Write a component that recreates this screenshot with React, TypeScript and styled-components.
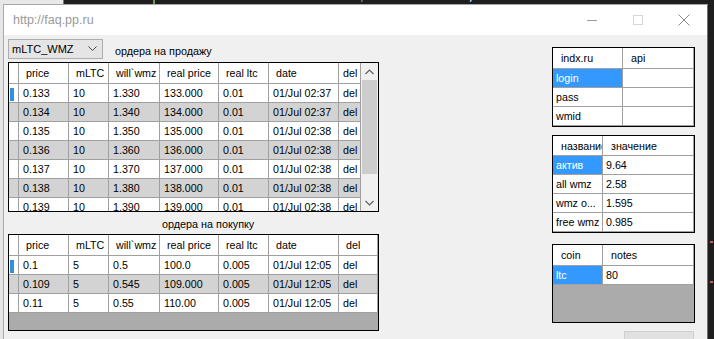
import React from 'react';
import styled, { createGlobalStyle } from 'styled-components';

const GlobalStyle = createGlobalStyle`
  html, body { margin: 0; padding: 0; background: #1e1e1e; }
  body { font-family: "Liberation Sans", Arial, sans-serif; }
`;

type Col = { title: string; width: number; pad?: number };

const sellCols: Col[] = [
  { title: 'price', width: 50 },
  { title: 'mLTC', width: 40 },
  { title: 'will`wmz', width: 51 },
  { title: 'real price', width: 59 },
  { title: 'real ltc', width: 50 },
  { title: 'date', width: 70 },
  { title: 'del', width: 22, pad: 4 },
];

const buyCols: Col[] = [...sellCols.slice(0, 6), { title: 'del', width: 39 }];

const sellRows = [133, 134, 135, 136, 137, 138, 139].map((n, i) => [
  (n / 1000).toFixed(3),
  '10',
  (n / 100).toFixed(3),
  n.toFixed(3),
  '0.01',
  i < 2 ? '01/Jul 02:37' : '01/Jul 02:38',
  'del',
]);

const buyRows = [
  ['0.1', '5', '0.5', '100.0', '0.005', '01/Jul 12:05', 'del'],
  ['0.109', '5', '0.545', '109.000', '0.005', '01/Jul 12:05', 'del'],
  ['0.11', '5', '0.55', '110.00', '0.005', '01/Jul 12:05', 'del'],
];

const App = () => {
  return (
    <>
      <GlobalStyle />
      <Screen>
        <EditorStrip>
          <LightCorner />
          <CodeBit $color="#569cd6" $left={42}>398</CodeBit>
          <CodeMark />
          <CodeBit $color="#9cdcfe" $left={160}>date $tave = 'xfd';</CodeBit>
        </EditorStrip>
        <Middle>
          <LeftEdge />
          <Window>
            <TitleBar>
              <Title>http://faq.pp.ru</Title>
              <Controls>
                <CtrlButton>
                  <svg width="10" height="10" viewBox="0 0 10 10">
                    <line x1="0" y1="5.5" x2="10" y2="5.5" stroke="#9a9a9a" strokeWidth="1" />
                  </svg>
                </CtrlButton>
                <CtrlButton>
                  <svg width="10" height="10" viewBox="0 0 10 10">
                    <rect x="0.5" y="0.5" width="9" height="9" fill="none" stroke="#d6d6d6" strokeWidth="1" />
                  </svg>
                </CtrlButton>
                <CtrlButton>
                  <svg width="12" height="12" viewBox="0 0 12 12">
                    <path d="M0.5 0.5 L11.5 11.5 M11.5 0.5 L0.5 11.5" stroke="#8a8a8a" strokeWidth="1" />
                  </svg>
                </CtrlButton>
              </Controls>
            </TitleBar>
            <Client>
              <LeftColumn>
                <Toolbar>
                  <Combo>
                    <span>mLTC_WMZ</span>
                    <svg width="9" height="6" viewBox="0 0 9 6">
                      <path d="M0.5 0.5 L4.5 4.5 L8.5 0.5" fill="none" stroke="#444" strokeWidth="1" />
                    </svg>
                  </Combo>
                  <Caption>ордера на продажу</Caption>
                </Toolbar>
                <OrderGrid cols={sellCols} rows={sellRows} height={150} scroll />
                <MidCaption>ордера на покупку</MidCaption>
                <OrderGrid cols={buyCols} rows={buyRows} height={97} />
              </LeftColumn>
              <RightColumn>
                <InfoGrid
                  height={80}
                  gap={0}
                  cols={[{ title: 'indx.ru', width: 70 }, { title: 'api', width: 71 }]}
                  rows={[['login', ''], ['pass', ''], ['wmid', '']]}
                />
                <InfoGrid
                  height={98}
                  headerHeight={20}
                  cols={[{ title: 'название', width: 50 }, { title: 'значение', width: 91 }]}
                  rows={[['актив', '9.64'], ['all wmz', '2.58'], ['wmz о...', '1.595'], ['free wmz', '0.985']]}
                />
                <InfoGrid
                  height={79}
                  gap={11}
                  cols={[{ title: 'coin', width: 50 }, { title: 'notes', width: 91 }]}
                  rows={[['ltc', '80']]}
                />
                <FormButton />
              </RightColumn>
            </Client>
          </Window>
          <RightEdge>
            <RedDot $top={241} />
            <RedDot $top={281} />
          </RightEdge>
        </Middle>
      </Screen>
    </>
  );
};
export default App;

type GridProps = { cols: Col[]; rows: string[][]; height: number; scroll?: boolean };

const OrderGrid = ({ cols, rows, height, scroll }: GridProps) => (
  <GridBox $h={height}>
    <GridBody>
      <HeaderRow $h={21}>
        <RowHead $bg="#fff" />
        {cols.map((c, i) => (
          <HeadCell key={i} $w={c.width} $pad={scroll ? c.pad : undefined}>{c.title}</HeadCell>
        ))}
      </HeaderRow>
      {rows.map((r, ri) => (
        <DataRow key={ri} $bg={ri % 2 ? '#d3d3d3' : '#fff'}>
          <RowHead $bg={ri % 2 ? '#d3d3d3' : '#fff'}>{ri === 0 && <Current />}</RowHead>
          {r.map((v, ci) => (
            <Cell key={ci} $w={cols[ci].width}>{v}</Cell>
          ))}
        </DataRow>
      ))}
    </GridBody>
    {scroll && (
      <ScrollBar>
        <Arrow>
          <svg width="9" height="6" viewBox="0 0 9 6">
            <path d="M0.5 5 L4.5 1 L8.5 5" fill="none" stroke="#606060" strokeWidth="1.2" />
          </svg>
        </Arrow>
        <Track>
          <Thumb />
        </Track>
        <Arrow>
          <svg width="9" height="6" viewBox="0 0 9 6">
            <path d="M0.5 1 L4.5 5 L8.5 1" fill="none" stroke="#606060" strokeWidth="1.2" />
          </svg>
        </Arrow>
      </ScrollBar>
    )}
  </GridBox>
);

type InfoProps = { cols: Col[]; rows: string[][]; height: number; headerHeight?: number; gap?: number };

const InfoGrid = ({ cols, rows, height, headerHeight = 21, gap = 8 }: InfoProps) => (
  <GridBox $h={height} $mt={gap}>
    <GridBody>
      <HeaderRow $h={headerHeight}>
        {cols.map((c, i) => (
          <HeadCell key={i} $w={c.width} $pad={8}>{c.title}</HeadCell>
        ))}
      </HeaderRow>
      {rows.map((r, ri) => (
        <DataRow key={ri} $bg="#fff">
          {r.map((v, ci) => (
            <Cell key={ci} $w={cols[ci].width} $pad={3} $sel={ri === 0 && ci === 0}>
              {v}
            </Cell>
          ))}
        </DataRow>
      ))}
    </GridBody>
  </GridBox>
);

const Screen = styled.div`
  width: 714px;
  height: 339px;
  overflow: hidden;
  display: flex;
  flex-direction: column;
  background: #1e1e1e;
`;

const EditorStrip = styled.div`
  position: relative;
  height: 4px;
  flex: none;
  overflow: hidden;
  background: #1e1e1e;
  display: flex;
`;

const LightCorner = styled.div`
  width: 63px;
  height: 4px;
  background: #e8e8e8;
  border-right: 1px solid #777;
`;

const CodeBit = styled.span<{ $color: string; $left: number }>`
  margin-left: ${p => p.$left}px;
  margin-top: -12px;
  font-family: "DejaVu Sans Mono", monospace;
  font-size: 14px;
  line-height: 14px;
  color: ${p => p.$color};
  white-space: nowrap;
`;

const CodeMark = styled.span`
  margin-left: 22px;
  width: 2px;
  height: 4px;
  background: #6a9955;
`;

const Middle = styled.div`
  flex: 1;
  display: flex;
  min-height: 0;
`;

const LeftEdge = styled.div`
  width: 3px;
  flex: none;
  background: #e6e6e6;
`;

const RightEdge = styled.div`
  position: relative;
  flex: 1;
  background: #1e1e1e;
`;

const RedDot = styled.div<{ $top: number }>`
  position: absolute;
  left: 2px;
  top: ${p => p.$top - 4}px;
  width: 3px;
  height: 2px;
  background: #c0606a;
`;

const Window = styled.div`
  width: 705px;
  flex: none;
  box-sizing: border-box;
  border-left: 1px solid #a8a8a8;
  border-right: 1px solid #707070;
  border-top: 1px solid #a8a8a8;
  background: #f0f0f0;
  display: flex;
  flex-direction: column;
`;

const TitleBar = styled.div`
  height: 30px;
  flex: none;
  background: #fff;
  display: flex;
  align-items: center;
  justify-content: space-between;
`;

const Title = styled.div`
  padding-left: 9px;
  font-size: 12.5px;
  color: #9a9a9a;
`;

const Controls = styled.div`
  display: flex;
  height: 100%;
`;

const CtrlButton = styled.div`
  width: 46px;
  height: 100%;
  display: flex;
  align-items: center;
  justify-content: center;
`;

const Client = styled.div`
  display: flex;
  gap: 173px;
  padding: 4px 0 0 4px;
`;

const LeftColumn = styled.div`
  width: 371px;
  display: flex;
  flex-direction: column;
`;

const Toolbar = styled.div`
  height: 20px;
  display: flex;
  align-items: center;
  margin-bottom: 3px;
`;

const Combo = styled.div`
  width: 95px;
  height: 20px;
  box-sizing: border-box;
  border: 1px solid #adadad;
  background: #e5e5e5;
  display: flex;
  align-items: center;
  justify-content: space-between;
  padding: 0 5px 0 3px;
  font-size: 11px;
  color: #000;
`;

const Caption = styled.div`
  margin-left: 12px;
  margin-top: 3px;
  font-size: 10.8px;
  color: #000;
`;

const MidCaption = styled.div`
  height: 22px;
  box-sizing: border-box;
  padding: 6px 0 0 154px;
  font-size: 10.8px;
  color: #000;
`;

const RightColumn = styled.div`
  width: 143px;
  display: flex;
  flex-direction: column;
  padding-top: 8px;
`;

const GridBox = styled.div<{ $h: number; $mt?: number }>`
  height: ${p => p.$h}px;
  margin-top: ${p => p.$mt ?? 0}px;
  flex: none;
  box-sizing: border-box;
  border: 1px solid #000;
  background: #ababab;
  display: flex;
  overflow: hidden;
  font-size: 10.7px;
  color: #000;
`;

const GridBody = styled.div`
  flex: 1;
  display: flex;
  flex-direction: column;
  min-width: 0;
`;

const HeaderRow = styled.div<{ $h: number }>`
  flex: none;
  height: ${p => p.$h}px;
  box-sizing: border-box;
  display: flex;
  align-items: center;
  background: #fff;
  border-bottom: 1px solid #a0a0a0;
`;

const DataRow = styled.div<{ $bg: string }>`
  flex: none;
  height: 19px;
  box-sizing: border-box;
  display: flex;
  background: ${p => p.$bg};
  border-bottom: 1px solid #a0a0a0;
`;

const RowHead = styled.div<{ $bg: string }>`
  flex: none;
  position: relative;
  width: 10px;
  height: 100%;
  box-sizing: border-box;
  background: ${p => p.$bg};
  border-right: 1px solid #a0a0a0;
`;

const Current = styled.div`
  position: absolute;
  left: 1px;
  top: 4px;
  width: 4px;
  height: 13px;
  background: #2f8fe6;
`;

const HeadCell = styled.div<{ $w: number; $pad?: number }>`
  flex: none;
  width: ${p => p.$w}px;
  height: 100%;
  box-sizing: border-box;
  display: flex;
  align-items: center;
  padding-left: ${p => p.$pad ?? 7}px;
  border-right: 1px solid #a0a0a0;
  white-space: nowrap;
  overflow: hidden;
`;

const Cell = styled.div<{ $w: number; $pad?: number; $sel?: boolean }>`
  flex: none;
  width: ${p => p.$w}px;
  box-sizing: border-box;
  padding-left: ${p => p.$pad ?? 4}px;
  line-height: 18px;
  border-right: 1px solid #a0a0a0;
  white-space: nowrap;
  overflow: hidden;
  background: ${p => (p.$sel ? '#3399ff' : 'transparent')};
  color: ${p => (p.$sel ? '#fff' : '#000')};
`;

const ScrollBar = styled.div`
  width: 17px;
  flex: none;
  display: flex;
  flex-direction: column;
  background: #f0f0f0;
`;

const Arrow = styled.div`
  height: 17px;
  flex: none;
  display: flex;
  align-items: center;
  justify-content: center;
`;

const Track = styled.div`
  flex: 1;
  display: flex;
  flex-direction: column;
`;

const Thumb = styled.div`
  height: 94px;
  margin: 0 1px;
  background: #cdcdcd;
`;

const FormButton = styled.div`
  align-self: flex-end;
  margin: 8px 1px 0 0;
  width: 70px;
  height: 23px;
  box-sizing: border-box;
  border: 1px solid #d0d0d0;
  background: #e1e1e1;
  flex: none;
`;
